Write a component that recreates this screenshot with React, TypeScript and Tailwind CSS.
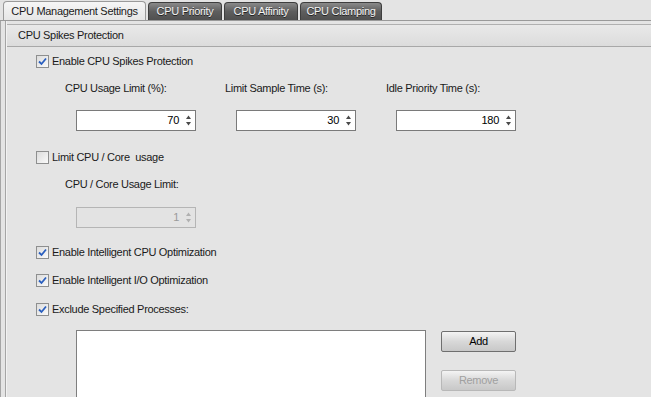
import React from 'react';

const font = { fontFamily: '"Liberation Sans", Arial, sans-serif' };

function Check({ checked }: { checked: boolean }) {
  return (
    <span className="w-[13px] h-[13px] shrink-0 border border-[#8e8f8f] bg-gradient-to-br from-[#dcdcdc] to-[#fafafa] flex items-center justify-center">
      {checked && (
        <svg width="9" height="9" viewBox="0 0 9 9">
          <path d="M1 4.5 L3.5 7 L8 1.5" fill="none" stroke="#2a5fbf" strokeWidth="1.8" />
        </svg>
      )}
    </span>
  );
}

function CheckRow({ label, checked, className }: { label: string; checked: boolean; className: string }) {
  return (
    <div className={`flex items-center gap-[3px] pl-[29px] ${className}`}>
      <Check checked={checked} />
      <span className="whitespace-pre text-[#1a1a1a]">{label}</span>
    </div>
  );
}

function Spin({ value, disabled }: { value: string; disabled?: boolean }) {
  return (
    <div
      className={`w-[120px] h-[21px] border flex items-center justify-end ${
        disabled ? 'border-[#b5b5b5] bg-[#e3e3e3] text-[#9a9a9a]' : 'border-[#7a7a7a] bg-white text-black'
      }`}
    >
      <span className="mr-[6px]">{value}</span>
      <svg width="7" height="13" viewBox="0 0 7 13" className="mr-[3px]">
        <path d="M3.5 1.5 L6 5 L1 5 Z" fill={disabled ? '#b0b0b0' : '#4a4a4a'} />
        <path d="M3.5 11.5 L6 8 L1 8 Z" fill={disabled ? '#b0b0b0' : '#4a4a4a'} />
      </svg>
    </div>
  );
}

function Btn({ label, disabled }: { label: string; disabled?: boolean }) {
  return (
    <div
      className={`w-[75px] h-[21px] rounded-[2px] border flex items-center justify-center bg-gradient-to-b from-[#f4f4f4] via-[#d8d8d8] to-[#c8c8c8] ${
        disabled ? 'border-[#b8b8b8] text-[#a0a0a0]' : 'border-[#6f6f6f] text-black'
      }`}
    >
      {label}
    </div>
  );
}

function Tab({ label, active, w }: { label: string; active?: boolean; w: string }) {
  return (
    <div
      className={`${w} flex items-center justify-center rounded-t-[4px] border border-b-0 ${
        active
          ? 'h-[19px] bg-gradient-to-b from-[#f6f6f6] to-[#e6e6e6] border-[#9a9a9a] text-[#1a1a1a]'
          : 'h-[18px] bg-gradient-to-b from-[#8a8a8a] via-[#5e5e5e] to-[#505050] border-[#3e3e3e] text-[#f4f4f4] [text-shadow:0_1px_0_#222]'
      }`}
    >
      {label}
    </div>
  );
}

export default function App() {
  return (
    <div className="w-[651px] h-[397px] overflow-hidden bg-[#e4e4e4] text-[11px] tracking-[-0.3px]" style={font}>
      {/* tab strip */}
      <div className="h-[21px] flex items-end gap-[2px] pl-[3px] border-b border-[#9a9a9a]">
        <Tab label="CPU Management Settings" active w="w-[143px]" />
        <Tab label="CPU Priority" w="w-[74px]" />
        <Tab label="CPU Affinity" w="w-[74px]" />
        <Tab label="CPU Clamping" w="w-[82px]" />
      </div>

      <div className="flex h-[376px]">
        {/* left frame lines */}
        <div className="w-[7px] flex shrink-0">
          <div className="w-px bg-[#a5a5a5]" />
          <div className="w-[4px]" />
          <div className="w-px bg-[#a5a5a5]" />
          <div className="w-px bg-[#f2f2f2]" />
        </div>

        <div className="flex-1 overflow-hidden">
          <div className="h-[4px] border-b border-[#b0b0b0]" />
          {/* group header */}
          <div className="h-[22px] flex items-center pl-[11px] border-b border-[#a8a8a8] bg-gradient-to-b from-[#e9e9e9] to-[#dcdcdc] text-[#1a1a1a]">
            CPU Spikes Protection
          </div>

          <CheckRow label="Enable CPU Spikes Protection" checked className="h-[28px]" />

          <div className="h-[26px] flex items-center whitespace-nowrap text-[#1a1a1a]">
            <span className="w-[160px] shrink-0 pl-[58px]">CPU Usage Limit (%):</span>
            <span className="w-[161px] shrink-0 pl-[58px]">Limit Sample Time (s):</span>
            <span className="pl-[58px]">Idle Priority Time (s):</span>
          </div>

          <div className="mt-[9px] flex gap-[40px] pl-[69px]">
            <Spin value="70" />
            <Spin value="30" />
            <Spin value="180" />
          </div>

          <CheckRow label="Limit CPU / Core  usage" checked={false} className="mt-[13px] h-[26px]" />

          <div className="h-[28px] flex items-center pl-[58px] text-[#1a1a1a]">CPU / Core Usage Limit:</div>

          <div className="mt-[9px] flex pl-[69px]">
            <Spin value="1" disabled />
          </div>

          <CheckRow label="Enable Intelligent CPU Optimization" checked className="mt-[10px] h-[28px]" />
          <CheckRow label="Enable Intelligent I/O Optimization" checked className="h-[28px]" />
          <CheckRow label="Exclude Specified Processes:" checked className="mt-[1px] h-[28px]" />

          <div className="mt-[7px] flex pl-[69px] gap-[15px]">
            <div className="w-[350px] h-[80px] bg-white border border-[#7e7e7e]" />
            <div className="flex flex-col gap-[18px] pt-[1px]">
              <Btn label="Add" />
              <Btn label="Remove" disabled />
            </div>
          </div>
        </div>
      </div>
    </div>
  );
}
